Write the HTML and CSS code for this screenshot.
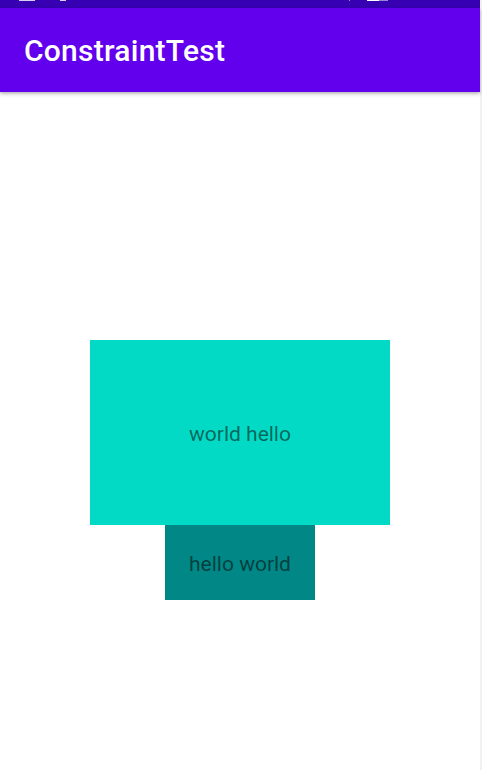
FILE: index.html
```html
<!DOCTYPE html>
<html>
<head>
<meta charset="utf-8">
<link rel="stylesheet" href="styles.css">
</head>
<body>
<div class="screen">
  <div class="phone">
    <div class="statusbar">
      <span class="sb-mark sb-a"></span>
      <span class="sb-mark sb-b"></span>
      <span class="sb-spacer"></span>
      <span class="sb-mark sb-c"></span>
      <span class="sb-mark sb-d"></span>
      <span class="sb-mark sb-e"></span>
    </div>
    <div class="appbar">
      <span class="title">ConstraintTest</span>
    </div>
    <div class="content">
      <div class="box big">world hello</div>
      <div class="box small">hello world</div>
    </div>
  </div>
  <div class="edge"></div>
</div>
</body>
</html>
```
FILE: styles.css
```css
html, body {
  margin: 0;
  padding: 0;
  width: 482px;
  height: 770px;
  overflow: hidden;
  background: #ffffff;
  font-family: Roboto, "Noto Sans", sans-serif;
}
.screen {
  display: flex;
  width: 482px;
  height: 770px;
}
.phone {
  width: 480px;
  height: 770px;
  display: flex;
  flex-direction: column;
  background: #ffffff;
}
.edge {
  width: 2px;
  height: 770px;
  background: #f1f1f1;
}
.statusbar {
  height: 8px;
  background: #3700b3;
  display: flex;
  align-items: flex-start;
  padding-left: 19px;
  padding-right: 92px;
}
.sb-mark {
  height: 1px;
  background: #d8d0f0;
}
.sb-a { width: 16px; }
.sb-b { width: 6px; margin-left: 25px; }
.sb-spacer { flex: 1; }
.sb-c { width: 1px; margin-right: 17px; background: #a898e0; }
.sb-d { width: 12px; background: #ffffff; }
.sb-e { width: 9px; background: #9a86d8; }
.appbar {
  height: 84px;
  background: #6200ee;
  display: flex;
  align-items: center;
  padding-left: 24px;
  box-shadow: 0 2px 4px rgba(0, 0, 0, 0.22), 0 1px 2px rgba(0, 0, 0, 0.12);
  position: relative;
  z-index: 1;
}
.title {
  color: #ffffff;
  font-size: 30px;
  font-weight: 500;
  letter-spacing: 0.25px;
  margin-top: 1px;
}
.content {
  flex: 1;
  display: flex;
  flex-direction: column;
  align-items: center;
  padding-top: 248px;
}
.box {
  display: flex;
  align-items: center;
  justify-content: center;
  color: rgba(0, 0, 0, 0.54);
  font-size: 21px;
  padding-top: 2px;
  box-sizing: border-box;
}
.big {
  width: 300px;
  height: 185px;
  background: #03dac5;
}
.small {
  width: 150px;
  height: 75px;
  background: #018786;
}
```
